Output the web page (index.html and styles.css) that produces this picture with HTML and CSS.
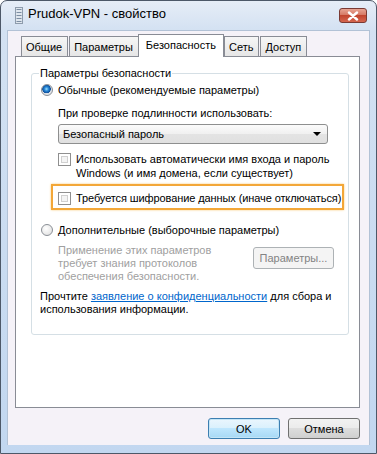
FILE: index.html
```html
<!DOCTYPE html>
<html lang="ru">
<head>
    <meta charset="UTF-8">
    <meta name="viewport" content="width=device-width, initial-scale=1.0">
    <title>Prudok-VPN - свойство</title>
    <link rel="stylesheet" href="styles.css">
</head>
<body>
    <div class="window">
        <div class="titlebar">
            <svg class="title-icon" width="8" height="17" viewBox="0 0 8 17">
                <rect x="0.5" y="0.5" width="7" height="16" fill="#dfe6ee" stroke="#8e9cad"/>
                <rect x="1.5" y="2" width="5" height="1" fill="#7c8ea3"/>
                <rect x="1.5" y="5" width="5" height="1" fill="#7c8ea3"/>
                <rect x="1.5" y="8" width="5" height="1" fill="#7c8ea3"/>
                <rect x="1.5" y="11" width="5" height="1" fill="#7c8ea3"/>
                <rect x="1.5" y="14" width="5" height="1" fill="#7c8ea3"/>
            </svg>
            <span class="title-text">Prudok-VPN - свойство</span>
            <div class="close-btn">
                <svg width="12" height="10" viewBox="0 0 12 10">
                    <path d="M2 1.5 L10 8.5 M10 1.5 L2 8.5" stroke="#fff" stroke-width="2.4" stroke-linecap="round"/>
                </svg>
            </div>
        </div>

        <div class="client">
            <div class="tabs">
                <div class="tab">Общие</div>
                <div class="tab">Параметры</div>
                <div class="tab active">Безопасность</div>
                <div class="tab">Сеть</div>
                <div class="tab">Доступ</div>
            </div>

            <div class="panel">
                <fieldset class="group">
                    <legend>Параметры безопасности</legend>

                    <div class="row option-first">
                        <span class="radio checked"></span>
                        <span>Обычные (рекомендуемые параметры)</span>
                    </div>

                    <div class="indent auth-label">При проверке подлинности использовать:</div>

                    <div class="indent combo">
                        <span>Безопасный пароль</span>
                        <span class="combo-arrow"></span>
                    </div>

                    <div class="indent row check-row">
                        <span class="checkbox"></span>
                        <span>Использовать автоматически имя входа и пароль<br>Windows (и имя домена, если существует)</span>
                    </div>

                    <div class="highlight row">
                        <span class="checkbox"></span>
                        <span>Требуется шифрование данных (иначе отключаться)</span>
                    </div>

                    <div class="row option-second">
                        <span class="radio"></span>
                        <span>Дополнительные (выборочные параметры)</span>
                    </div>

                    <div class="indent advanced">
                        <p class="disabled-text">Применение этих параметров<br>требует знания протоколов<br>обеспечения безопасности.</p>
                        <div class="btn disabled">Параметры...</div>
                    </div>

                    <p class="privacy">Прочтите <a href="#">заявление о конфиденциальности</a> для сбора и<br>использования информации.</p>
                </fieldset>
            </div>

            <div class="footer">
                <div class="btn default">OK</div>
                <div class="btn">Отмена</div>
            </div>
        </div>
    </div>
</body>
</html>
```

FILE: styles.css
```css
body {
    margin: 0;
    padding: 0;
    font-family: "Liberation Sans", Arial, sans-serif;
    font-size: 11px;
    color: #000;
    background: #fff;
}
.window {
    width: 377px;
    height: 454px;
    box-sizing: border-box;
    border: 1px solid #4d5868;
    border-radius: 7px 7px 0 0;
    background: linear-gradient(#e6edf7, #d3e1f2 30px, #c2d7f0);
    padding: 0 6px 8px 6px;
    display: flex;
    flex-direction: column;
}
.titlebar {
    height: 29px;
    box-sizing: border-box;
    padding-bottom: 4px;
    display: flex;
    align-items: center;
    flex-shrink: 0;
}
.title-icon {
    margin-left: 8px;
    margin-top: 3px;
}
.title-text {
    margin-left: 5px;
    font-size: 13px;
    flex: 1;
}
.close-btn {
    width: 28px;
    height: 15px;
    margin-right: 3px;
    margin-top: 4px;
    box-sizing: border-box;
    border: 1px solid #7a3a33;
    border-radius: 3px;
    background: linear-gradient(#e8a493, #d67a66 45%, #c2452f 50%, #d4664f);
    display: flex;
    align-items: center;
    justify-content: center;
}
.client {
    flex: 1;
    background: #f5f2f8;
    padding: 3px 9px 0 7px;
    border: 1px solid #b2c2d6;
    border-bottom: none;
}
.tabs {
    display: flex;
    align-items: flex-end;
    height: 22px;
    padding-left: 6px;
    position: relative;
    z-index: 1;
}
.tab {
    height: 20px;
    box-sizing: border-box;
    padding: 4px 5px 0 4px;
    border: 1px solid #898c95;
    border-bottom: none;
    background: linear-gradient(#f6f6f6, #e6e6e6);
    margin-right: 1px;
    color: #000;
}
.tab.active {
    height: 23px;
    margin: 0 -1px -1px -2px;
    padding: 4px 7px 0 7px;
    background: #fff;
}
.tab.active + .tab {
    margin-left: 1px;
}
.panel {
    height: 352px;
    box-sizing: border-box;
    border: 1px solid #898c95;
    background: #fff;
    padding: 0 12px 0 15px;
}
.group {
    margin: 9px 0 0 0;
    border: 1px solid #d5dfe5;
    border-radius: 3px;
    padding: 0 4px 18px 7px;
    display: flex;
    flex-direction: column;
    align-items: flex-start;
}
.group legend {
    padding: 0 1px;
    line-height: 14px;
}
.row {
    display: flex;
    align-items: flex-start;
    line-height: 14px;
}
.indent {
    margin-left: 19px;
}
.option-first {
    margin-top: 3px;
}
.option-second {
    margin-top: 13px;
}
.radio {
    width: 12px;
    height: 12px;
    box-sizing: border-box;
    margin: 1px 5px 0 2px;
    border-radius: 50%;
    border: 1px solid #8a8f96;
    background: radial-gradient(circle at 40% 35%, #fff, #dcdcdc);
    flex-shrink: 0;
}
.radio.checked {
    background: radial-gradient(circle at 45% 40%, #9fe0ff 0, #2a8ad8 2px, #0d4f9c 4px, #d8dde4 4.5px, #f4f4f4);
}
.auth-label {
    margin-top: 9px;
    line-height: 14px;
}
.combo {
    margin-top: 4px;
    width: 270px;
    height: 20px;
    box-sizing: border-box;
    border: 1px solid #8e8f8f;
    border-radius: 3px;
    background: linear-gradient(#fbfbfb, #f0f0f0 50%, #e4e4e4 50%, #e0e0e0);
    display: flex;
    align-items: center;
    justify-content: space-between;
    padding: 0 6px 0 4px;
}
.combo-arrow {
    width: 0;
    height: 0;
    border-left: 4px solid transparent;
    border-right: 4px solid transparent;
    border-top: 4px solid #000;
}
.check-row {
    margin-top: 8px;
}
.checkbox {
    width: 13px;
    height: 13px;
    box-sizing: border-box;
    border: 1px solid #8f8f8f;
    background: #f4f4f4;
    box-shadow: inset 0 0 0 2px #fff, inset 0 0 0 3px #d0d0d0;
    margin: 1px 5px 0 0;
    flex-shrink: 0;
}
.highlight {
    margin: 4px 0 0 12px;
    width: max-content;
    border: 2px solid #f3a738;
    box-shadow: 0 0 2px #f8c978;
    padding: 5px 1px 3px 5px;
    letter-spacing: -0.1px;
}
.advanced {
    margin-top: 7px;
    width: 276px;
    display: flex;
    justify-content: space-between;
    align-items: flex-start;
}
.disabled-text {
    margin: 0;
    line-height: 13px;
    color: #a0a0a0;
}
.btn {
    width: 72px;
    height: 21px;
    box-sizing: border-box;
    border: 1px solid #707070;
    border-radius: 3px;
    background: linear-gradient(#f2f2f2, #ebebeb 50%, #dddddd 50%, #cfcfcf);
    display: flex;
    align-items: center;
    justify-content: center;
}
.btn.disabled {
    width: 81px;
    height: 22px;
    margin-top: 3px;
    border-color: #adb2b5;
    background: #f4f4f4;
    color: #838383;
}
.privacy {
    margin: 7px 0 0 1px;
    line-height: 13px;
}
.privacy a {
    color: #0066cc;
}
.footer {
    display: flex;
    justify-content: flex-end;
    gap: 8px;
    margin-top: 10px;
}
.btn.default {
    border-color: #3c7fb1;
    background: linear-gradient(#eaf6fd, #d9f0fc 50%, #bee6fd 50%, #a7d9f5);
    box-shadow: inset 0 0 0 1px #c4e5f6;
}
```
